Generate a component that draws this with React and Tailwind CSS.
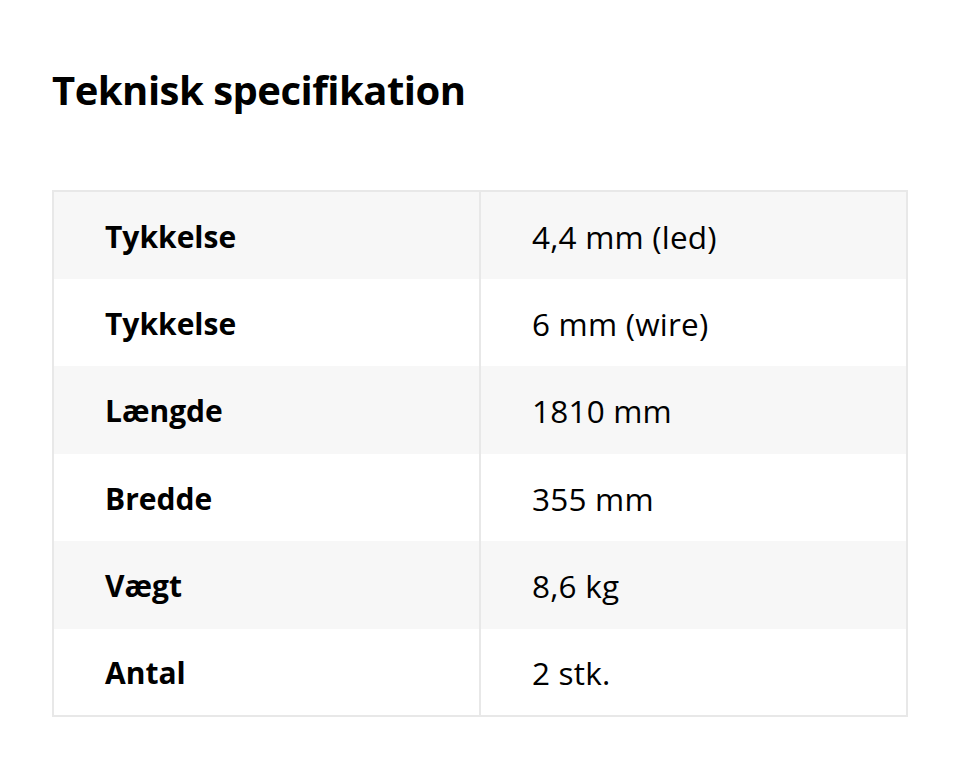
const rows = [
  ['Tykkelse', '4,4 mm (led)'],
  ['Tykkelse', '6 mm (wire)'],
  ['Længde', '1810 mm'],
  ['Bredde', '355 mm'],
  ['Vægt', '8,6 kg'],
  ['Antal', '2 stk.'],
]

export default function App() {
  return (
    <div className="bg-white min-h-screen px-[52px] pt-[62px] text-black" style={{ fontFamily: '"Open Sans", "Noto Sans", sans-serif' }}>
      <h1 className="text-[40px] font-bold leading-[56px] tracking-[-0.5px]">Teknisk specifikation</h1>
      <table className="mt-[72px] w-[856px] border-collapse border-2 border-[#e8e8e8] table-fixed">
        <tbody>
          {rows.map(([label, value], i) => (
            <tr key={i} className={i % 2 === 0 ? 'bg-[#f7f7f7] h-[87.5px]' : 'bg-white h-[87.5px]'}>
              <td className="w-1/2 pl-[51px] pt-[2px] text-[30px] font-bold border-r-2 border-[#e8e8e8]">{label}</td>
              <td className="pl-[51px] pt-[2px] text-[31.5px] tracking-[0.2px]">{value}</td>
            </tr>
          ))}
        </tbody>
      </table>
    </div>
  )
}
